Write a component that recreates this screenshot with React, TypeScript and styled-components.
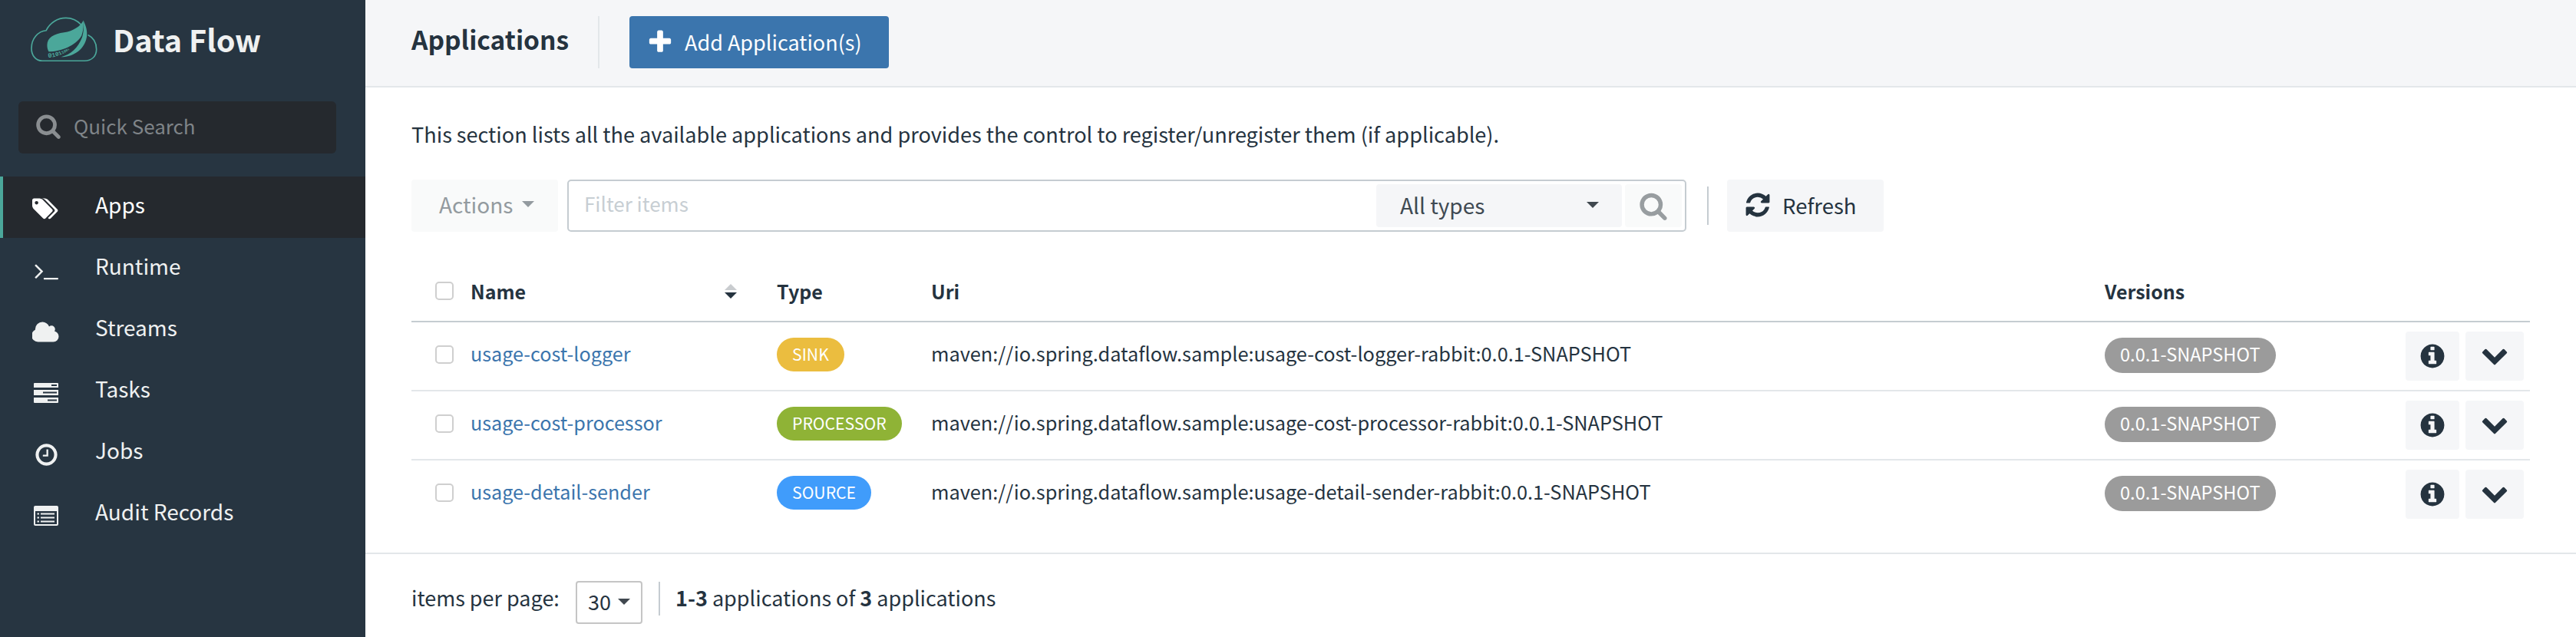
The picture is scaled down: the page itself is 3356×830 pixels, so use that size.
import React from 'react';
import styled, { createGlobalStyle } from 'styled-components';

const GlobalStyle = createGlobalStyle`
  html, body {
    margin: 0;
    padding: 0;
    background: #fff;
  }
  body {
    font-family: "Noto Sans CJK SC", "Noto Sans", sans-serif;
    font-size: 27px;
    color: #25333f;
  }
  * {
    box-sizing: border-box;
  }
`;

const Page = styled.div`
  display: grid;
  grid-template-columns: 476px 1fr;
  width: 3356px;
  height: 830px;
  overflow: hidden;
`;

const Sidebar = styled.aside`
  background: #273541;
  display: flex;
  flex-direction: column;
`;

const Brand = styled.div`
  display: flex;
  align-items: center;
  height: 104px;
  padding-left: 40px;
  gap: 20px;
  padding-bottom: 2px;
`;

const BrandName = styled.span`
  font-size: 39.6px;
  font-weight: 700;
  line-height: 50px;
  color: #eff1f1;
`;

const QuickSearch = styled.div`
  display: flex;
  align-items: center;
  gap: 16px;
  width: 414px;
  height: 68px;
  margin: 28px 0 30px 24px;
  padding: 0 22px 4px;
  background: #25292e;
  border-radius: 6px;
  color: #7f8488;
  font-size: 26px;
  line-height: 36px;
`;

const NavItem = styled.div<{ $active?: boolean }>`
  display: flex;
  align-items: center;
  height: 80px;
  padding-left: 38px;
  padding-bottom: 8px;
  font-size: 28px;
  line-height: 40px;
  background: ${(p) => (p.$active ? '#25292e' : 'transparent')};
  border-left: 4px solid ${(p) => (p.$active ? '#4ba79a' : 'transparent')};
  color: ${(p) => (p.$active ? '#ffffff' : '#eff1f1')};
`;

const NavIcon = styled.span`
  display: flex;
  align-items: center;
  justify-content: center;
  width: 36px;
  margin-right: 46px;
  position: relative;
  top: 6px;
`;

const Main = styled.main`
  display: flex;
  flex-direction: column;
  min-width: 0;
`;

const Header = styled.header`
  display: flex;
  align-items: center;
  height: 114px;
  padding: 0 60px 2px;
  background: #f5f6f8;
  border-bottom: 2px solid #e3e7ea;
`;

const Title = styled.h1`
  width: 243px;
  margin: 0 0 8px;
  font-size: 33.5px;
  font-weight: 700;
  line-height: 48px;
  color: #25333f;
`;

const HeaderDivider = styled.span`
  width: 2px;
  height: 68px;
  margin-right: 39px;
  background: #e3e7ea;
`;

const AddButton = styled.button`
  display: flex;
  align-items: center;
  gap: 14px;
  width: 338px;
  height: 68px;
  padding: 0 0 0 22px;
  border: none;
  border-radius: 4px;
  background: #3b75ad;
  color: #fff;
  font: inherit;
  font-size: 27px;
  line-height: 36px;
`;

const Content = styled.section`
  padding: 0 60px;
`;

const Description = styled.p`
  margin: 41px 0 39px;
  font-size: 27.1px;
  line-height: 40px;
`;

const Toolbar = styled.div`
  display: flex;
  align-items: center;
  height: 68px;
`;

const ActionsButton = styled.button`
  display: flex;
  align-items: center;
  gap: 12px;
  width: 191px;
  height: 68px;
  padding: 0 0 4px 36px;
  margin-right: 12px;
  border: none;
  border-radius: 4px;
  background: #f9fafa;
  color: #939a9f;
  font: inherit;
  font-size: 28px;
`;

const Caret = styled.span<{ $color?: string; $up?: boolean; $size?: number }>`
  display: inline-block;
  width: 0;
  height: 0;
  border-left: ${(p) => p.$size ?? 8}px solid transparent;
  border-right: ${(p) => p.$size ?? 8}px solid transparent;
  ${(p) => (p.$up ? 'border-bottom' : 'border-top')}: ${(p) => p.$size ?? 8}px solid ${(p) => p.$color ?? '#40484f'};
`;

const FilterBox = styled.div`
  display: flex;
  align-items: center;
  width: 1458px;
  height: 68px;
  padding: 0 4px 0 20px;
  border: 2px solid #c5ccd1;
  border-radius: 5px;
`;

const FilterText = styled.span`
  flex: 1;
  color: #c7ced3;
  font-size: 26px;
  line-height: 36px;
  padding-bottom: 6px;
`;

const TypeSelect = styled.div`
  display: flex;
  align-items: center;
  justify-content: space-between;
  width: 320px;
  height: 56px;
  padding: 0 30px 2px 31px;
  margin-right: 4px;
  border-radius: 4px;
  background: #f5f6f8;
  color: #3f4a53;
  font-size: 28px;
  line-height: 36px;
`;

const SearchButton = styled.div`
  display: flex;
  align-items: center;
  justify-content: center;
  width: 74px;
  height: 56px;
  border-radius: 4px;
  background: #f9fafa;
`;

const ToolbarDivider = styled.span`
  width: 2px;
  height: 50px;
  margin: 0 24px 0 27px;
  background: #c5ccd1;
`;

const RefreshButton = styled.button`
  display: flex;
  align-items: center;
  gap: 14px;
  width: 204px;
  height: 68px;
  padding: 0 0 2px 22px;
  border: none;
  border-radius: 4px;
  background: #f5f6f8;
  color: #25333f;
  font: inherit;
  font-size: 27.5px;
`;

const COLUMNS = '77px 399px 201px 1529px 392px 162px';

const TableHead = styled.div`
  display: grid;
  grid-template-columns: ${COLUMNS};
  align-items: center;
  height: 78px;
  margin-top: 40px;
  border-bottom: 2px solid #c5ccd1;
  padding-bottom: 2px;
  font-size: 25px;
  font-weight: 700;
  line-height: 36px;
`;

const NameHead = styled.div`
  display: flex;
  align-items: center;
  justify-content: space-between;
  padding-right: 52px;
`;

const SortIcon = styled.span`
  display: flex;
  flex-direction: column;
  gap: 3px;
`;

const TableRow = styled.div<{ $last?: boolean }>`
  display: grid;
  grid-template-columns: ${COLUMNS};
  align-items: center;
  height: ${(p) => (p.$last ? 88 : 90)}px;
  border-bottom: ${(p) => (p.$last ? 'none' : '2px solid #e3e7ea')};
  font-size: 25px;
  line-height: 36px;
`;

const CheckCell = styled.div`
  padding-left: 31px;
  display: flex;
`;

const Check = styled.span<{ $row?: boolean }>`
  display: block;
  width: 24px;
  height: 24px;
  margin-bottom: ${(p) => (p.$row ? 4 : 0)}px;
  border: 2px solid #cfcfcf;
  border-radius: 5px;
  background: #fff;
`;

const NameLink = styled.a`
  color: #3b75ad;
  font-size: 25.2px;
  padding-bottom: 8px;
`;

const UriText = styled.span`
  font-size: 25.3px;
  padding-bottom: 8px;
`;

const Badge = styled.span<{ $bg: string }>`
  justify-self: start;
  height: 44px;
  margin-bottom: 4px;
  padding: 0 20px;
  border-radius: 22px;
  background: ${(p) => p.$bg};
  color: #fff;
  font-size: 21.2px;
  line-height: 42px;
`;

const VersionBadge = styled(Badge)`
  height: 46px;
  margin-bottom: 2px;
  border-radius: 23px;
  font-size: 23.6px;
  line-height: 42px;
`;

const RowActions = styled.div`
  display: flex;
  gap: 8px;
`;

const IconButton = styled.button<{ $wide?: boolean }>`
  display: flex;
  align-items: center;
  justify-content: center;
  width: ${(p) => (p.$wide ? 76 : 70)}px;
  height: 64px;
  padding: 0 0 ${(p) => (p.$wide ? 4 : 0)}px;
  border: none;
  border-radius: 4px;
  background: #f5f6f8;
  color: #25333f;
`;

const Footer = styled.footer`
  display: flex;
  align-items: center;
  height: 110px;
  margin-top: 32px;
  padding: 18px 60px 0;
  border-top: 2px solid #e3e7ea;
  font-size: 27px;
  line-height: 40px;
`;

const FooterLabel = styled.span`
  width: 214px;
  padding-bottom: 12px;
`;

const FooterCount = styled.span`
  padding-bottom: 12px;
`;

const PageSize = styled.div`
  display: flex;
  align-items: center;
  justify-content: space-between;
  width: 87px;
  height: 56px;
  padding: 0 14px 2px;
  border: 2px solid #c5c5c5;
  border-radius: 4px;
`;

const FooterDivider = styled.span`
  width: 2px;
  height: 44px;
  margin: 0 20px 10px 21px;
  background: #c5ccd1;
`;

const SearchGlyph = styled.span<{ $color: string }>`
  display: flex;
  color: ${(p) => p.$color};
`;

const Logo = () => (
  <svg width="87" height="59" viewBox="60 70 260 176" aria-hidden>
    <path
      d="M105 241 C80 241 63 220 63 192 C63 155 88 126 120 123 C135 92 165 74 197 74 C222 74 242 84 258 102 M283 140 C303 150 316 170 316 196 C316 224 296 241 270 241 L105 241"
      fill="none"
      stroke="#4ba79a"
      strokeWidth="5"
    />
    <path
      d="M265 83 C255 106 225 125 190 130 C150 135 124 150 124 180 C124 190 126 198 130 205 C180 205 235 182 258 143 C262 130 268 110 265 83 Z"
      fill="#4ba79a"
    />
    <path
      d="M265 83 C272 100 280 115 279 140 C276 190 232 226 178 226 C215 218 245 190 260 150 C266 130 268 110 265 83 Z"
      fill="#4ba79a"
    />
    <path id="bits" d="M128 229 C180 225 225 195 258 152" fill="none" />
    <text fontFamily="'Liberation Mono', monospace" fill="#4ba79a" fontWeight="700">
      <textPath href="#bits">
        <tspan fontSize="26">0</tspan>
        <tspan fontSize="24">1</tspan>
        <tspan fontSize="23">0</tspan>
        <tspan fontSize="21">1</tspan>
        <tspan fontSize="17">1</tspan>
        <tspan fontSize="15">0</tspan>
        <tspan fontSize="13">0</tspan>
        <tspan fontSize="11">1</tspan>
      </textPath>
    </text>
  </svg>
);

const Fa = ({ d, size, vb = '0 0 1792 1792', w }: { d: string; size: number; vb?: string; w?: number }) => (
  <svg width={w ?? size} height={size} viewBox={vb} fill="currentColor" aria-hidden>
    <path d={d} />
  </svg>
);

const SEARCH = 'M1216 832q0-185-131.5-316.5t-316.5-131.5-316.5 131.5-131.5 316.5 131.5 316.5 316.5 131.5 316.5-131.5 131.5-316.5zm512 832q0 52-38 90t-90 38q-54 0-90-38l-343-342q-179 124-399 124-143 0-273.5-55.5t-225-150-150-225-55.5-273.5 55.5-273.5 150-225 225-150 273.5-55.5 273.5 55.5 225 150 150 225 55.5 273.5q0 220-124 399l343 343q37 37 37 90z';
const PLUS = 'M1600 736v192q0 40-28 68t-68 28h-416v416q0 40-28 68t-68 28h-192q-40 0-68-28t-28-68v-416h-416q-40 0-68-28t-28-68v-192q0-40 28-68t68-28h416v-416q0-40 28-68t68-28h192q40 0 68 28t28 68v416h416q40 0 68 28t28 68z';
const REFRESH = 'M1639 1056q0 5-1 7-64 268-268 434.5t-478 166.5q-146 0-282.5-55t-243.5-157l-129 129q-19 19-45 19t-45-19-19-45v-448q0-26 19-45t45-19h448q26 0 45 19t19 45-19 45l-137 137q71 66 161 102t187 36q134 0 250-65t186-179q11-17 53-117 8-23 30-23h192q13 0 22.5 9.5t9.5 22.5zm25-800v448q0 26-19 45t-45 19h-448q-26 0-45-19t-19-45 19-45l138-138q-148-137-349-137-134 0-250 65t-186 179q-11 17-53 117-8 23-30 23h-199q-13 0-22.5-9.5t-9.5-22.5v-7q65-268 270-434.5t480-166.5q146 0 284 55.5t245 156.5l130-129q19-19 45-19t45 19 19 45z';
const INFO = 'M1152 1376v-160q0-14-9-23t-23-9h-96v-512q0-14-9-23t-23-9h-320q-14 0-23 9t-9 23v160q0 14 9 23t23 9h96v320h-96q-14 0-23 9t-9 23v160q0 14 9 23t23 9h448q14 0 23-9t9-23zm-128-896v-160q0-14-9-23t-23-9h-192q-14 0-23 9t-9 23v160q0 14 9 23t23 9h192q14 0 23-9t9-23zm640 416q0 209-103 385.5t-279.5 279.5-385.5 103-385.5-103-279.5-279.5-103-385.5 103-385.5 279.5-279.5 385.5-103 385.5 103 279.5 279.5 103 385.5z';
const CHEVRON = 'M1683 808l-742 741q-19 19-45 19t-45-19l-742-741q-19-19-19-45.5t19-45.5l166-165q19-19 45-19t45 19l531 531 531-531q19-19 45-19t45 19l166 165q19 19 19 45.5t-19 45.5z';
const TAGS = 'M448 448q0-53-37.5-90.5t-90.5-37.5-90.5 37.5-37.5 90.5 37.5 90.5 90.5 37.5 90.5-37.5 37.5-90.5zm1067 576q0 53-37 90l-491 492q-39 37-91 37-53 0-90-37l-715-716q-38-37-64.5-101t-26.5-117v-416q0-52 38-90t90-38h416q53 0 117 26.5t102 64.5l715 714q37 39 37 91zm384 0q0 53-37 90l-491 492q-39 37-91 37-36 0-59-14t-53-45l470-470q37-37 37-90 0-52-37-91l-715-714q-38-38-102-64.5t-117-26.5h224q53 0 117 26.5t102 64.5l715 714q37 39 37 91z';
const CLOUD = 'M1856 1216q0 159-112.5 271.5t-271.5 112.5h-1088q-185 0-316.5-131.5t-131.5-316.5q0-132 71-241.5t187-163.5q-2-28-2-43 0-212 150-362t362-150q158 0 286.5 88t187.5 230q70-62 166-62 106 0 181 75t75 181q0 75-41 138 129 30 213 134.5t84 239.5z';
const TERMINAL = 'M649 983l-466 466q-10 10-23 10t-23-10l-50-50q-10-10-10-23t10-23l393-393-393-393q-10-10-10-23t10-23l50-50q10-10 23-10t23 10l466 466q10 10 10 23t-10 23zm1079 457v64q0 14-9 23t-23 9h-960q-14 0-23-9t-9-23v-64q0-14 9-23t23-9h960q14 0 23 9t9 23z';
const CLOCK = 'M1024 544v448q0 14-9 23t-23 9h-320q-14 0-23-9t-9-23v-64q0-14 9-23t23-9h224v-352q0-14 9-23t23-9h64q14 0 23 9t9 23zm416 352q0-148-73-273t-198-198-273-73-273 73-198 198-73 273 73 273 198 198 273 73 273-73 198-198 73-273zm224 0q0 209-103 385.5t-279.5 279.5-385.5 103-385.5-103-279.5-279.5-103-385.5 103-385.5 279.5-279.5 385.5-103 385.5 103 279.5 279.5 103 385.5z';

const TasksIcon = () => (
  <svg width="32" height="26" viewBox="0 0 32 26" aria-hidden>
    <path d="M1 0 H31 a1 1 0 0 1 1 1 V6 H0 V1 a1 1 0 0 1 1-1 Z" fill="currentColor" />
    <rect y="9" width="32" height="7" fill="currentColor" />
    <path d="M0 19 H32 V25 a1 1 0 0 1 -1 1 H1 a1 1 0 0 1 -1 -1 Z" fill="currentColor" />
    <rect x="23" y="2" width="7" height="2" fill="#273541" />
    <rect x="12" y="11.5" width="18" height="2" fill="#273541" />
    <rect x="18" y="21.5" width="12" height="2" fill="#273541" />
  </svg>
);

const ListIcon = () => (
  <svg width="32" height="26" viewBox="0 0 32 26" aria-hidden>
    <rect width="32" height="26" rx="2" fill="currentColor" />
    <rect x="2" y="7" width="28" height="17" fill="#273541" />
    <path d="M9 10.5 H27 M9 15.5 H27 M9 20.5 H27" stroke="currentColor" strokeWidth="2" />
    <path d="M4.5 10.5 H7 M4.5 15.5 H7 M4.5 20.5 H7" stroke="currentColor" strokeWidth="2" />
  </svg>
);

const navItems: { label: string; icon: React.ReactNode; active?: boolean }[] = [
  { label: 'Apps', icon: <Fa d={TAGS} size={34} w={39} vb="0 0 2048 1792" />, active: true },
  { label: 'Runtime', icon: <Fa d={TERMINAL} size={33} /> },
  { label: 'Streams', icon: <Fa d={CLOUD} size={33} w={36} vb="0 0 1920 1792" /> },
  { label: 'Tasks', icon: <TasksIcon /> },
  { label: 'Jobs', icon: <Fa d={CLOCK} size={33} /> },
  { label: 'Audit Records', icon: <ListIcon /> },
];

const rows = [
  { name: 'usage-cost-logger', type: 'SINK', color: '#ebbd3f', uri: 'maven://io.spring.dataflow.sample:usage-cost-logger-rabbit:0.0.1-SNAPSHOT' },
  { name: 'usage-cost-processor', type: 'PROCESSOR', color: '#8fb336', uri: 'maven://io.spring.dataflow.sample:usage-cost-processor-rabbit:0.0.1-SNAPSHOT' },
  { name: 'usage-detail-sender', type: 'SOURCE', color: '#409cfb', uri: 'maven://io.spring.dataflow.sample:usage-detail-sender-rabbit:0.0.1-SNAPSHOT' },
];

const App: React.FC = () => {
  return (
    <Page>
      <GlobalStyle />
      <Sidebar>
        <Brand>
          <Logo />
          <BrandName>Data Flow</BrandName>
        </Brand>
        <QuickSearch>
          <SearchGlyph $color="#8a8e91">
            <Fa d={SEARCH} size={34} />
          </SearchGlyph>
          <span>Quick Search</span>
        </QuickSearch>
        {navItems.map((item) => (
          <NavItem key={item.label} $active={item.active}>
            <NavIcon>{item.icon}</NavIcon>
            {item.label}
          </NavItem>
        ))}
      </Sidebar>
      <Main>
        <Header>
          <Title>Applications</Title>
          <HeaderDivider />
          <AddButton>
            <Fa d={PLUS} size={36} />
            Add Application(s)
          </AddButton>
        </Header>
        <Content>
          <Description>
            This section lists all the available applications and provides the control to register/unregister them (if applicable).
          </Description>
          <Toolbar>
            <ActionsButton>
              Actions
              <Caret $color="#939a9f" />
            </ActionsButton>
            <FilterBox>
              <FilterText>Filter items</FilterText>
              <TypeSelect>
                All types
                <Caret />
              </TypeSelect>
              <SearchButton>
                <SearchGlyph $color="#989da0">
                  <Fa d={SEARCH} size={38} />
                </SearchGlyph>
              </SearchButton>
            </FilterBox>
            <ToolbarDivider />
            <RefreshButton>
              <Fa d={REFRESH} size={36} />
              Refresh
            </RefreshButton>
          </Toolbar>
          <TableHead>
            <CheckCell>
              <Check />
            </CheckCell>
            <NameHead>
              Name
              <SortIcon>
                <Caret $up $color="#c9cccf" />
                <Caret $color="#25333f" />
              </SortIcon>
            </NameHead>
            <span>Type</span>
            <span>Uri</span>
            <span>Versions</span>
            <span />
          </TableHead>
          {rows.map((row, i) => (
            <TableRow key={row.name} $last={i === rows.length - 1}>
              <CheckCell>
                <Check $row />
              </CheckCell>
              <NameLink>{row.name}</NameLink>
              <Badge $bg={row.color}>{row.type}</Badge>
              <UriText>{row.uri}</UriText>
              <VersionBadge $bg="#9b9b9b">0.0.1-SNAPSHOT</VersionBadge>
              <RowActions>
                <IconButton>
                  <Fa d={INFO} size={36} />
                </IconButton>
                <IconButton $wide>
                  <Fa d={CHEVRON} size={36} />
                </IconButton>
              </RowActions>
            </TableRow>
          ))}
        </Content>
        <Footer>
          <FooterLabel>items per page:</FooterLabel>
          <PageSize>
            30
            <Caret />
          </PageSize>
          <FooterDivider />
          <FooterCount>
            <b>1-3</b> applications of <b>3</b> applications
          </FooterCount>
        </Footer>
      </Main>
    </Page>
  );
};

export default App;
